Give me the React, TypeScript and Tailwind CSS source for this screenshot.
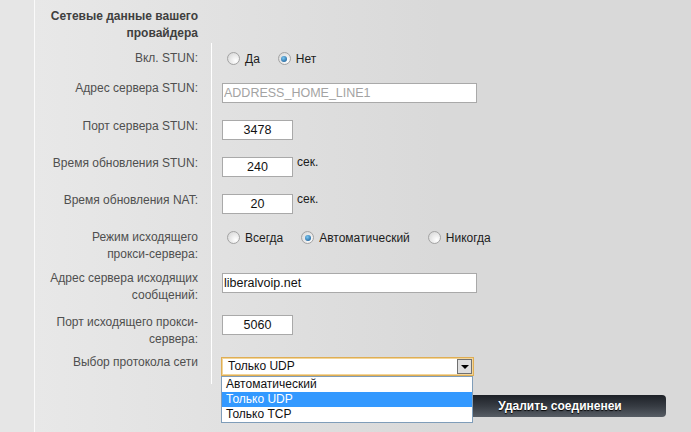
import type { ReactNode } from 'react'

const LABEL_COL = 'w-[177px] shrink-0 border-r border-white pr-[13px] pt-[7px] text-right leading-[17px] text-[#4f4f4f]'

function Radio({ checked = false }: { checked?: boolean }) {
  return (
    <span className="flex h-[13px] w-[13px] shrink-0 items-center justify-center rounded-full border border-[#a3a3a3] bg-[radial-gradient(circle_at_70%_70%,#ffffff,#d2d2d2)]">
      {checked && (
        <span className="h-[6px] w-[6px] rounded-full bg-[radial-gradient(circle_at_40%_35%,#7cc8f2,#0d4e8a)]" />
      )}
    </span>
  )
}

function RadioGroup({ options, value }: { options: string[]; value: string }) {
  return (
    <div className="flex h-[17px] items-center pl-[5px] text-[12px] text-[#1c1c1c]">
      {options.map((opt, i) => (
        <div key={opt} className={`flex items-center gap-[5px] ${i > 0 ? 'ml-[18px]' : ''}`}>
          <Radio checked={opt === value} />
          <span>{opt}</span>
        </div>
      ))}
    </div>
  )
}

function TextBox({ value, wide = false, muted = false }: { value: string; wide?: boolean; muted?: boolean }) {
  return (
    <input
      readOnly
      value={value}
      className={`h-[20px] border border-[#a9a9a9] bg-white px-[1px] text-[12.5px] outline-none ${
        wide ? 'w-[255px] text-left' : 'w-[71px] text-center'
      } ${muted ? 'text-[#a3a3a3]' : 'text-[#111]'}`}
    />
  )
}

function Row({ label, height, contentTop, children }: { label: ReactNode; height: string; contentTop: string; children: ReactNode }) {
  return (
    <div className={`flex ${height}`}>
      <div className={LABEL_COL}>{label}</div>
      <div className={`flex items-start pl-[10px] ${contentTop}`}>{children}</div>
    </div>
  )
}

function Unit() {
  return <span className="-mt-[3px] ml-[4px] leading-[17px] text-[#1c1c1c]">сек.</span>
}

function ProtocolSelect() {
  const items = ['Автоматический', 'Только UDP', 'Только TCP']
  return (
    <div className="relative -ml-[1px] h-[19px] w-[253px] border border-[#dfae55] bg-white text-[12px] text-[#111] shadow-[inset_0_0_0_1px_#f2d59a]">
      <span className="absolute left-[6px] top-0 leading-[17px]">Только UDP</span>
      <span className="absolute right-[1px] top-[1px] flex h-[15px] w-[15px] items-center justify-center border border-[#707070] bg-[#dedede]">
        <span className="h-0 w-0 border-x-[4px] border-t-[4px] border-x-transparent border-t-black" />
      </span>
      <div className="absolute left-[-1px] top-[18px] z-10 w-[252px] border border-[#7f9db9] bg-white">
        {items.map((item) => (
          <div
            key={item}
            className={`h-[15px] px-[4px] leading-[15px] ${item === 'Только UDP' ? 'bg-[#3399ff] text-white' : ''}`}
          >
            {item}
          </div>
        ))}
      </div>
    </div>
  )
}

export default function App() {
  return (
    <div className="flex h-[432px] w-[691px] overflow-hidden font-['Liberation_Sans',Arial,sans-serif] text-[12px]">
      <div className="w-[34px] shrink-0 bg-[#e6e6e6]" />
      <div className="w-px shrink-0 bg-[#fafafa]" />
      <div className="flex-1 bg-[linear-gradient(to_right,#e8e8e8,#d9d9d9_62%)]">
        <div className="w-[177px] pr-[14px] pt-[8px] text-right font-bold leading-[17px] text-[#3f3f3f]">
          Сетевые данные вашего
          <br />
          провайдера
        </div>
        <div className="mt-[1px] flex flex-col">
          <Row label="Вкл. STUN:" height="h-[30px]" contentTop="pt-[7px]">
            <RadioGroup options={['Да', 'Нет']} value="Нет" />
          </Row>
          <Row label="Адрес сервера STUN:" height="h-[38px]" contentTop="pt-[10px]">
            <TextBox value="ADDRESS_HOME_LINE1" wide muted />
          </Row>
          <Row label="Порт сервера STUN:" height="h-[37px]" contentTop="pt-[9px]">
            <TextBox value="3478" />
          </Row>
          <Row label="Время обновления STUN:" height="h-[37px]" contentTop="pt-[9px]">
            <TextBox value="240" />
            <Unit />
          </Row>
          <Row label="Время обновления NAT:" height="h-[37px]" contentTop="pt-[9px]">
            <TextBox value="20" />
            <Unit />
          </Row>
          <Row
            label={
              <>
                Режим исходящего
                <br />
                прокси-сервера:
              </>
            }
            height="h-[41px]"
            contentTop="pt-[7px]"
          >
            <RadioGroup options={['Всегда', 'Автоматический', 'Никогда']} value="Автоматический" />
          </Row>
          <Row
            label={
              <>
                Адрес сервера исходящих
                <br />
                сообщений:
              </>
            }
            height="h-[44px]"
            contentTop="pt-[10px]"
          >
            <TextBox value="liberalvoip.net" wide />
          </Row>
          <Row
            label={
              <>
                Порт исходящего прокси-
                <br />
                сервера:
              </>
            }
            height="h-[40px]"
            contentTop="pt-[8px]"
          >
            <TextBox value="5060" />
          </Row>
          <Row label="Выбор протокола сети" height="h-[37px]" contentTop="pt-[10px]">
            <ProtocolSelect />
          </Row>
        </div>
        <div className="ml-[419px] mt-[11px] flex h-[22px] w-[212px] items-center justify-center rounded-[4px] bg-[linear-gradient(#1d2127,#363b42_50%,#575d65)] text-[12px] font-bold text-white [text-shadow:0_1px_1px_#000]">
          Удалить соединенеи
        </div>
      </div>
    </div>
  )
}
